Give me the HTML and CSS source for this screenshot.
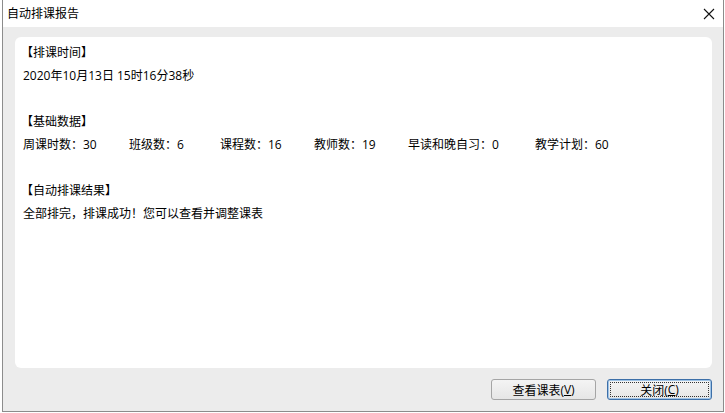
FILE: index.html
```html
<!DOCTYPE html>
<html lang="zh-CN">
<head>
<meta charset="utf-8">
<title>自动排课报告</title>
<link rel="stylesheet" href="styles.css">
</head>
<body>
<div class="window">
  <div class="titlebar">
    <span class="title">自动排课报告</span>
    <svg class="close" width="12" height="12" viewBox="0 0 12 12"><path d="M1 1 L11 11 M11 1 L1 11" stroke="#111" stroke-width="1.1" fill="none"/></svg>
  </div>
  <div class="client">
    <div class="panel">
      <div class="line head">【排课时间】</div>
      <div class="line">2020年10月13日 15时16分38秒</div>
      <div class="line blank"></div>
      <div class="line head">【基础数据】</div>
      <div class="line stats">
        <span>周课时数：30</span>
        <span>班级数：6</span>
        <span>课程数：16</span>
        <span>教师数：19</span>
        <span>早读和晚自习：0</span>
        <span>教学计划：60</span>
      </div>
      <div class="line blank"></div>
      <div class="line head">【自动排课结果】</div>
      <div class="line">全部排完，排课成功！您可以查看并调整课表</div>
    </div>
    <div class="buttons">
      <button class="btn">查看课表(<u>V</u>)</button>
      <button class="btn focused"><span class="focusrect">关闭(<u>C</u>)</span></button>
    </div>
  </div>
</div>
</body>
</html>
```
FILE: styles.css
```css
html, body {
  margin: 0;
  padding: 0;
  width: 725px;
  height: 413px;
  overflow: hidden;
  background: #ffffff;
  font-family: "Open Sans", "Noto Sans CJK SC", "Microsoft YaHei", sans-serif;
  font-size: 12px;
  color: #000;
}
.window {
  box-sizing: border-box;
  margin-left: 2px;
  width: 722px;
  height: 412px;
  border: 1px solid #8c8c8c;
  border-top: none;
  display: flex;
  flex-direction: column;
  background: #ececec;
}
.titlebar {
  height: 27px;
  background: #ffffff;
  display: flex;
  align-items: center;
  justify-content: space-between;
  padding: 0 8px 0 4px;
  flex: none;
}
.title {
  font-size: 12px;
  line-height: 27px;
}
.close {
  display: block;
  margin-top: 1px;
}
.client {
  flex: 1;
  display: flex;
  flex-direction: column;
  padding: 10px 11px 11px 12px;
  background: #ececec;
}
.panel {
  flex: 1;
  background: #ffffff;
  border-radius: 6px;
  padding: 4px 8px 0 8px;
}
.line {
  height: 23px;
  line-height: 23px;
  white-space: nowrap;
}
.head {
  margin-left: -2px;
}
.stats {
  display: grid;
  grid-template-columns: 106px 91px 94px 94px 127px auto;
}
.buttons {
  display: flex;
  justify-content: flex-end;
  gap: 11px;
  margin-top: 11px;
}
.btn {
  width: 105px;
  height: 21px;
  box-sizing: border-box;
  border: 1px solid #a5a5a5;
  border-radius: 3px;
  background: linear-gradient(#f4f4f4, #e6e6e6);
  font-family: "Open Sans", "Noto Sans CJK SC", "Microsoft YaHei", sans-serif;
  font-size: 12px;
  padding: 0;
  color: #000;
  display: flex;
  align-items: center;
  justify-content: center;
}
.btn u {
  text-decoration: underline;
  text-underline-offset: 1px;
}
.btn.focused {
  border: 1px solid #3d6fa8;
  box-shadow: inset 0 0 0 1px #9ec3e6;
  padding: 2px;
}
.focusrect {
  flex: 1;
  align-self: stretch;
  display: flex;
  align-items: center;
  justify-content: center;
  border: 1px dotted #333;
  border-radius: 1px;
}
```
